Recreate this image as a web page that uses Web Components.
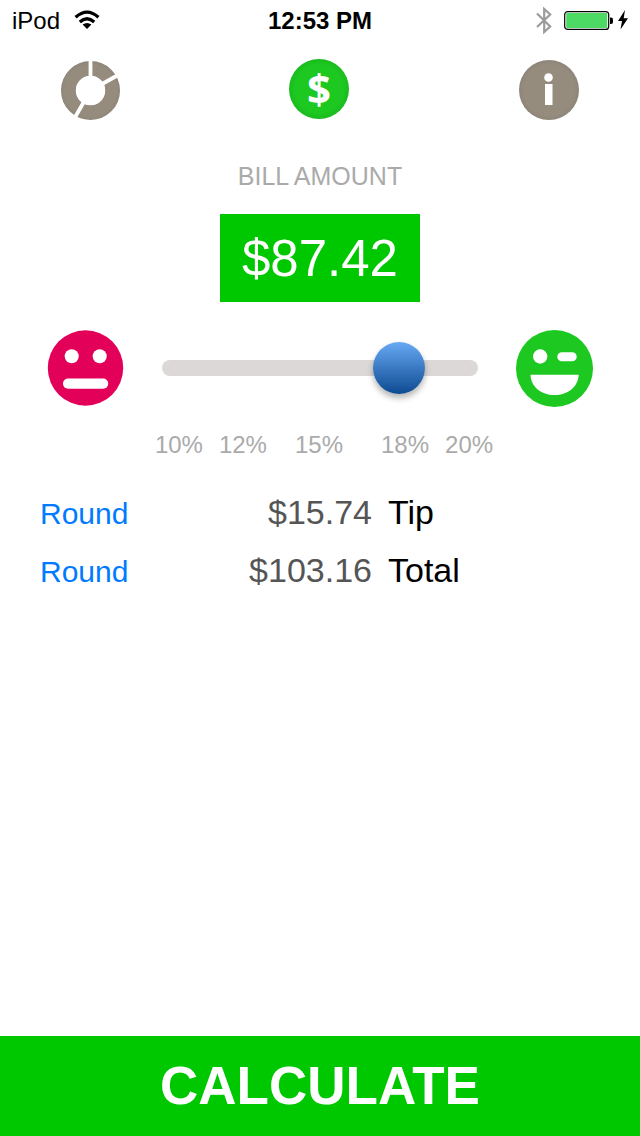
<!DOCTYPE html>
<html lang="en">
<head>
<meta charset="utf-8">
<meta name="viewport" content="width=device-width, initial-scale=1">
<title>Tip Calculator</title>
<style>
  body { margin: 0; background: #fff; color: #000; font-family: "Liberation Sans", Arial, sans-serif; }
</style>
</head>
<body>
<tip-app></tip-app>

<script>
const define = (name, html) => {
  const template = document.createElement('template');
  template.innerHTML = html;
  customElements.define(name, class extends HTMLElement {
    constructor() {
      super();
      this.attachShadow({ mode: 'open' }).append(template.content.cloneNode(true));
    }
  });
};

define('status-bar', `
<style>
  :host { display: grid; grid-template-columns: 1fr auto 1fr; align-items: center; height: 40px; padding: 0 12px; font-size: 24px; line-height: 28px; }
  svg { display: block; }
  .left, .right { display: flex; align-items: center; }
  .left { gap: 14px; }
  .right { justify-content: flex-end; gap: 12px; }
  .power { display: flex; align-items: center; gap: 4px; }
  span, .time { padding-top: 2px; }
  .time { font-weight: 700; }
</style>
<div class="left"><span>iPod</span>
  <svg width="26" height="20" viewBox="0 0 26 20" aria-hidden="true">
    <g fill="none" stroke="#000" stroke-width="3.300"><path d="M1.600 7.200Q13-3 24.400 7.200"/><path d="M5.800 11.900Q13 5.600 20.200 11.900"/></g>
    <path d="M13 19L8.600 14.600Q13 11.200 17.400 14.600Z"/>
  </svg>
</div>
<div class="time">12:53 PM</div>
<div class="right">
  <svg width="16" height="28" viewBox="0 0 16 28" fill="none" stroke="#9b9b9b" stroke-width="2.200" aria-hidden="true"><path d="M1 7.500L14.200 20.500 8.200 26V3L14.200 8.500 1 21"/></svg>
  <div class="power">
    <svg width="50" height="20" viewBox="0 0 50 20" aria-hidden="true"><rect x=".7" y="1.600" width="44" height="17.800" rx="3" fill="#fff" stroke="#000" stroke-width="1.200"/><rect x="2.200" y="3.100" width="41" height="14.800" rx="1" fill="#4cd964"/><path d="M46 7.500h1q2 0 2 2v2.500q0 2-2 2h-1z"/></svg>
    <svg width="10" height="20" viewBox="0 0 10 20" aria-hidden="true"><path d="M7 0L0 11h4L2.500 19.500 10 8.200H5.700z"/></svg>
  </div>
</div>`);

define('tab-bar', `
<style>
  :host { display: block; padding: 19px 60px 0; }
  nav { display: flex; justify-content: space-between; }
  button { display: block; width: 60px; height: 60px; padding: 0; border: 0; border-radius: 50%; background: none; cursor: pointer; }
  svg { display: block; overflow: visible; }
  text { font: 700 42px "Open Sans", sans-serif; }
</style>
<nav aria-label="Sections">
  <button type="button" aria-label="Split">
    <svg width="60" height="60" viewBox="0 0 60 60">
      <defs><radialGradient id="split-fill" gradientUnits="userSpaceOnUse" cx="30.500" cy="31.500" r="30"><stop offset=".85" stop-color="#958c7e"/><stop offset="1" stop-color="#8d8578"/></radialGradient></defs>
      <circle cx="30.500" cy="31.500" r="22" fill="none" stroke="url(#split-fill)" stroke-width="15"/>
      <path d="M30.500 31.500V0M30.500 31.500L59 15.500M30.500 31.500L14 60" stroke="#fff" stroke-width="3.800"/>
      <circle cx="30.500" cy="31.500" r="14.700" fill="#fff"/>
    </svg>
  </button>
  <button type="button" aria-label="Tip" aria-current="page">
    <svg width="60" height="60" viewBox="0 0 60 60">
      <defs><radialGradient id="tip-fill"><stop offset=".8" stop-color="#1dc821"/><stop offset="1" stop-color="#1abb1e"/></radialGradient></defs>
      <circle cx="29" cy="30" r="30" fill="url(#tip-fill)"/>
      <text x="29" y="45" text-anchor="middle" fill="#fff">$</text>
    </svg>
  </button>
  <button type="button" aria-label="Info">
    <svg width="60" height="60" viewBox="0 0 60 60">
      <defs><radialGradient id="info-fill"><stop offset=".85" stop-color="#958c7e"/><stop offset="1" stop-color="#8d8578"/></radialGradient></defs>
      <circle cx="29" cy="31" r="30" fill="url(#info-fill)"/>
      <circle cx="28.500" cy="18.500" r="4.300" fill="#fff"/><path d="M25 25h7.500v21H25z" fill="#fff"/>
    </svg>
  </button>
</nav>`);

define('bill-amount', `
<style>
  :host { display: flex; flex-direction: column; align-items: center; gap: 24px; padding-top: 43px; }
  label { color: #aaa; font-size: 25px; line-height: 28px; }
  input { box-sizing: border-box; width: 200px; height: 88px; padding: 0; border: 0; border-radius: 0; background: #00c800; color: #fff; font: 51px "Liberation Sans", Arial, sans-serif; text-align: center; }
</style>
<label for="bill">BILL AMOUNT</label>
<input id="bill" type="text" inputmode="decimal" value="$87.42">`);

define('mood-face', `
<style>
  :host { display: block; }
  svg { display: none; overflow: visible; }
  :host([mood="neutral"]) .neutral, :host([mood="happy"]) .happy { display: block; }
</style>
<svg class="neutral" width="76" height="76" viewBox="0 0 76 76" role="img" aria-label="Poor service"><circle cx="37.500" cy="38" r="37.700" fill="#e30059"/><g fill="#fff"><circle cx="23.700" cy="26.200" r="7"/><circle cx="51.700" cy="26.200" r="7"/><rect x="15" y="48.500" width="45.200" height="10.300" rx="5"/></g></svg>
<svg class="happy" width="76" height="76" viewBox="0 0 76 76" role="img" aria-label="Great service"><circle cx="38.500" cy="38.500" r="38.500" fill="#1dc821"/><g fill="#fff"><circle cx="24.200" cy="26.500" r="7.200"/><rect x="41.300" y="22.200" width="19.400" height="9" rx="4.500"/><path d="M14.500 44.700H62.700C62 57 52 65 38.500 65S15 57 14.500 44.700Z"/></g></svg>`);

define('tip-slider', `
<style>
  :host { display: block; padding-top: 28px; }
  .row { display: grid; grid-template-columns: auto 1fr auto; align-items: center; gap: 38px; padding: 0 48px; }
  input { -webkit-appearance: none; appearance: none; display: block; width: 100%; height: 52px; margin: 0; background: none; }
  input::-webkit-slider-runnable-track { height: 16px; border-radius: 8px; background: #dcd8d8; }
  input::-webkit-slider-thumb { -webkit-appearance: none; width: 52px; height: 52px; margin-top: -18px; border: 0; border-radius: 50%; background: linear-gradient(#68a9f5, #0d4a90); box-shadow: 0 4px 6px rgba(0,0,0,.3); }
  .scale { display: flex; justify-content: center; gap: 28px; padding: 25px 0 0 8px; color: #aaa; font-size: 24px; line-height: 28px; }
  .pair { display: flex; gap: 16px; }
  .pair:last-child { margin-left: 10px; }
</style>
<div class="row">
  <slot name="low"></slot>
  <input type="range" min="10" max="20" step="1" value="18" aria-label="Tip percentage">
  <slot name="high"></slot>
</div>
<div class="scale">
  <div class="pair"><span>10%</span><span>12%</span></div>
  <span>15%</span>
  <div class="pair"><span>18%</span><span>20%</span></div>
</div>`);

define('result-row', `
<style>
  :host { display: grid; grid-template-columns: 104px 1fr 1fr; column-gap: 16px; align-items: baseline; padding: 0 40px; font-size: 34px; line-height: 40px; }
  button { justify-self: start; padding: 0; border: 0; background: none; color: #007aff; font: 30px/36px "Liberation Sans", Arial, sans-serif; cursor: pointer; }
  output { color: #555; text-align: right; }
</style>
<button type="button">Round</button>
<output><slot name="amount"></slot></output>
<span><slot></slot></span>`);

define('calculate-button', `
<style>
  :host { display: block; margin-top: auto; }
  button { display: block; width: 100%; height: 100px; padding: 0 0 2px; border: 0; background: #00c800; color: #fff; font: 700 53px "Liberation Sans", Arial, sans-serif; cursor: pointer; }
</style>
<button type="button"><slot></slot></button>`);

define('tip-app', `
<style>
  :host { display: flex; flex-direction: column; min-height: 100vh; }
  .results { display: grid; gap: 18px; padding-top: 33px; }
</style>
<status-bar></status-bar>
<tab-bar></tab-bar>
<bill-amount></bill-amount>
<tip-slider><mood-face slot="low" mood="neutral"></mood-face><mood-face slot="high" mood="happy"></mood-face></tip-slider>
<div class="results">
  <result-row><span slot="amount">$15.74</span>Tip</result-row>
  <result-row><span slot="amount">$103.16</span>Total</result-row>
</div>
<calculate-button>CALCULATE</calculate-button>`);
</script>
</body>
</html>
